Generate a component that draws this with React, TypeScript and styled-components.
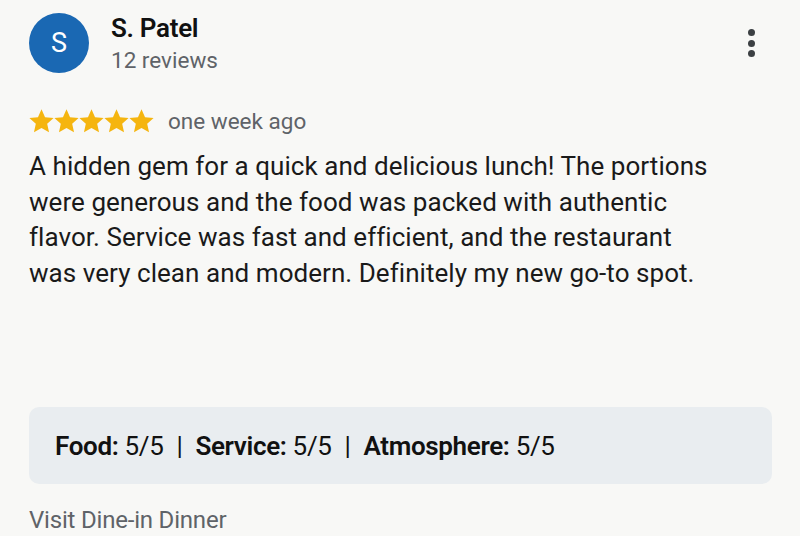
import React from "react";
import styled, { createGlobalStyle } from "styled-components";

const Global = createGlobalStyle`
  html, body { margin: 0; padding: 0; background: #f8f8f6; }
  body { font-family: Roboto, "Noto Sans", "Liberation Sans", sans-serif; }
`;

const Card = styled.div`
  width: 800px;
  height: 536px;
  box-sizing: border-box;
  padding: 13px 28px 0 29px;
  background: #f8f8f6;
  display: flex;
  flex-direction: column;
  overflow: hidden;
`;

const Header = styled.div`
  display: flex;
  align-items: flex-start;
  gap: 22px;
`;

const Avatar = styled.div`
  width: 60px;
  height: 60px;
  border-radius: 50%;
  background: #1a68b3;
  color: #fff;
  display: flex;
  align-items: center;
  justify-content: center;
  font-size: 27px;
  font-weight: 400;
  flex-shrink: 0;
`;

const Who = styled.div`
  display: flex;
  flex-direction: column;
  flex: 1;
`;

const Name = styled.div`
  font-size: 26px;
  font-weight: 600;
  color: #111;
  line-height: 30px;
  letter-spacing: -0.3px;
`;

const Sub = styled.div`
  font-size: 22.5px;
  color: #5f6368;
  line-height: 34px;
`;

const Kebab = styled.button`
  border: 0;
  background: none;
  padding: 0;
  margin: 16px 17px 0 0;
  display: flex;
  flex-direction: column;
  gap: 3.5px;
`;

const Dot = styled.span`
  width: 7px;
  height: 7px;
  border-radius: 50%;
  background: #3c4043;
`;

const MetaRow = styled.div`
  display: flex;
  align-items: center;
  gap: 14px;
  margin-top: 31px;
`;

const Stars = styled.div`
  display: flex;
  gap: 0px;
`;

const When = styled.span`
  font-size: 22.5px;
  color: #5f6368;
`;

const Body = styled.p`
  margin: 15px 0 0;
  width: 690px;
  font-size: 26px;
  line-height: 35.5px;
  letter-spacing: 0.05px;
  color: #1a1a1a;
`;

const Ratings = styled.div`
  margin-top: auto;
  height: 77px;
  box-sizing: border-box;
  background: #e9edf0;
  border-radius: 10px;
  display: flex;
  align-items: center;
  padding: 0 26px;
  font-size: 26px;
  color: #111;
  letter-spacing: -0.35px;
`;

const Label = styled.b`
  font-weight: 600;
`;

const Sep = styled.span`
  margin: 0 13px;
`;

const Visit = styled.div`
  margin: 22px 0 2px;
  font-size: 24px;
  color: #5f6368;
  line-height: 28px;
  letter-spacing: -0.2px;
`;

const Star = () => (
  <svg width="25" height="24" viewBox="1.6 1.9 20.8 20">
    <path
      d="M12 2.2l2.95 6.55 7.15.72-5.37 4.8 1.55 7.03L12 17.65 5.72 21.3l1.55-7.03L1.9 9.47l7.15-.72z"
      fill="#f5b50f"
    />
  </svg>
);

export default function App() {
  return (
    <>
      <Global />
      <Card>
        <Header>
          <Avatar>S</Avatar>
          <Who>
            <Name>S. Patel</Name>
            <Sub>12 reviews</Sub>
          </Who>
          <Kebab aria-label="More">
            <Dot />
            <Dot />
            <Dot />
          </Kebab>
        </Header>
        <MetaRow>
          <Stars>
            {[0, 1, 2, 3, 4].map((i) => (
              <Star key={i} />
            ))}
          </Stars>
          <When>one week ago</When>
        </MetaRow>
        <Body>
          A hidden gem for a quick and delicious lunch! The portions were generous and the food
          was packed with authentic flavor. Service was fast and efficient, and the restaurant was
          very clean and modern. Definitely my new go-to spot.
        </Body>
        <Ratings>
          <Label>Food:</Label>&nbsp;5/5<Sep>|</Sep>
          <Label>Service:</Label>&nbsp;5/5<Sep>|</Sep>
          <Label>Atmosphere:</Label>&nbsp;5/5
        </Ratings>
        <Visit>Visit Dine-in Dinner</Visit>
      </Card>
    </>
  );
}
